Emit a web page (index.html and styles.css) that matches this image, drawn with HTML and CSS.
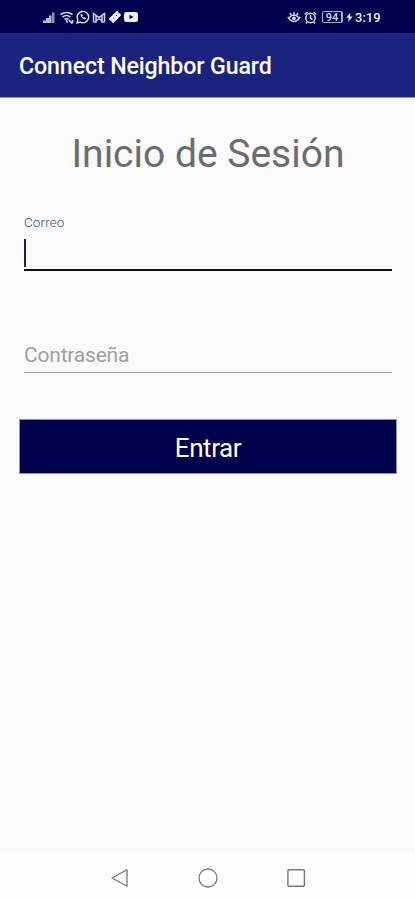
FILE: index.html
```html
<!DOCTYPE html>
<html lang="es">
<head>
  <meta charset="UTF-8">
  <meta name="viewport" content="width=device-width, initial-scale=1.0">
  <title>Connect Neighbor Guard</title>
  <link rel="stylesheet" href="styles.css">
</head>
<body>
  <div class="status-bar">
    <div class="status-left">
      <svg width="12" height="13" viewBox="0 0 12 13" fill="#dcdcf0">
        <path d="M0 9.500h3V12H0zM3 7h3v5H3zM6 4.500h2.500V12H6z" opacity=".85"/>
        <path d="M9 1.500h2.500V12H9z" opacity=".65"/>
      </svg>
      <svg width="14" height="13" viewBox="0 0 14 13" fill="none" stroke="#d0d0e8" stroke-width="1.700">
        <path d="M.5 3.500Q6.500-.5 12.500 3.500M2.500 6Q6.500 3 10.500 6M4.500 8.500Q6.500 7 8.500 8.500"/>
        <path d="M6 9.500l2 2M9 9l3 3.500M12.500 9v3.500"/>
      </svg>
      <svg width="14" height="14" viewBox="0 0 14 14" fill="none" stroke="#e4e4f4" stroke-width="1.400">
        <path d="M1 13l.9-3.200A5.700 5.700 0 1 1 4.200 12.100z"/>
        <path d="M4.700 4.200c-.8 2 2.300 5.300 4.800 5l.5-1.300-1.500-.8-.8.7-1.600-1.600.7-.8-.8-1.500z" fill="#e4e4f4" stroke="none"/>
      </svg>
      <svg width="14" height="13" viewBox="0 0 14 13" fill="none" stroke="#d0d0e8" stroke-width="1.500">
        <path d="M1.500 11V2.500L7 6.500l5.500-4V11M1.500 11h2.500V4.500M12.500 11H10V4.500M4 10L7 7.500l3 2.500"/>
      </svg>
      <svg width="14" height="14" viewBox="0 0 14 14">
        <path d="M8.800 1l1.300 1.100a1 1 0 0 0 1.300 1.300L13 5 5.200 13l-1.500-1.300a1 1 0 0 0-1.400-1.300L1 9z" fill="#f0f0fb" stroke="#f0f0fb" stroke-width=".6"/>
        <path d="M8 5l1.200 1.100M5.200 7.800l1.200 1.100" stroke="#00004d" stroke-width=".8"/>
      </svg>
      <svg width="14" height="12" viewBox="0 0 14 12">
        <rect y="1" width="14" height="10" rx="2.500" fill="#f0f0fb"/>
        <path d="M5.500 3.700v4.600l4-2.300z" fill="#00004d"/>
      </svg>
    </div>
    <div class="status-right">
      <svg width="14" height="13" viewBox="0 0 14 13" fill="none" stroke="#dcdcf0" stroke-width="1.400">
        <path d="M.8 6Q7 15 13.200 6M2.500 6.500Q7 1.500 11.500 6.500M7 1v3M3 2l1.300 2M11 2L9.700 4"/>
        <circle cx="7" cy="7.300" r="1.200" fill="#dcdcf0"/>
      </svg>
      <svg class="alarm" width="13" height="13" viewBox="0 0 13 13" fill="none" stroke="#dcdcf0" stroke-width="1.500">
        <circle cx="6.500" cy="7" r="4.700"/>
        <path d="M.7 3.500L3.500 1M12.300 3.500L9.500 1M6.500 4v3.300l2 1.200M3 11l-1 1.500M10 11l1 1.500"/>
      </svg>
      <span class="battery">94</span>
      <svg width="7" height="12" viewBox="0 0 7 12" fill="#e4e4f4">
        <path d="M4.400 1.500L.3 6.800h2.400L2.200 11l4.500-5.500H4z"/>
      </svg>
      <span class="clock">3:19</span>
    </div>
  </div>

  <div class="app-bar"><span class="app-name">Connect Neighbor Guard</span></div>

  <div class="login-form">
    <h1 class="login-header">Inicio de Sesión</h1>
    <div class="input-group active">
      <label class="small-label">Correo</label>
      <div class="caret"></div>
    </div>
    <div class="input-group">
      <label class="placeholder">Contraseña</label>
    </div>
    <button class="login-button">Entrar</button>
  </div>

  <div class="nav-bar">
    <svg width="20" height="22" viewBox="0 0 20 22" fill="none" stroke="#777" stroke-width="1.300">
      <path d="M17 2.700v16.600L2 11z" stroke-linejoin="round"/>
    </svg>
    <svg width="20" height="22" viewBox="0 0 20 22" fill="none" stroke="#777" stroke-width="1.300">
      <circle cx="10" cy="11" r="9"/>
    </svg>
    <svg width="20" height="22" viewBox="0 0 20 22" fill="none" stroke="#777" stroke-width="1.400">
      <rect x="1.900" y="2.700" width="16.500" height="16.600" rx="1"/>
    </svg>
  </div>
</body>
</html>
```

FILE: styles.css
```css
* {
  box-sizing: border-box;
}
body {
  font-family: Roboto, sans-serif;
  margin: 0;
  height: 900px;
  display: flex;
  flex-direction: column;
  background-color: #fafafa;
}
.status-bar {
  height: 33px;
  padding: 1px 34px 0 43px;
  display: flex;
  justify-content: space-between;
  align-items: center;
  background-color: #00004d;
}
.status-left, .status-right {
  display: flex;
  align-items: center;
}
.status-left {
  gap: 2px;
}
.status-left svg:first-child {
  margin-right: 3px;
}
.alarm {
  margin: 0 5px 0 3px;
}
.battery {
  width: 21px;
  height: 12px;
  margin-right: 3px;
  border: 1px solid #a8a8d0;
  border-right-width: 2px;
  border-radius: 2px;
  color: #dcdcf0;
  font-size: 11px;
  font-weight: 500;
  line-height: 11px;
  text-align: center;
}
.clock {
  width: 26px;
  margin-left: 2px;
  color: #e8e8f5;
  font-size: 13px;
  font-weight: 500;
  white-space: nowrap;
}
.app-bar {
  height: 65px;
  padding: 2px 19px 0;
  display: flex;
  align-items: center;
  background-color: #1a237e;
  border-bottom: 1px solid #8c90c0;
}
.app-name {
  color: white;
  font-size: 23.2px;
  font-weight: 500;
  letter-spacing: -0.12px;
}
.login-form {
  flex: 1;
  padding: 31px 18px 0 19px;
}
.login-header {
  height: 48px;
  margin: 0 0 36px;
  color: #6c6c6c;
  font-size: 39px;
  font-weight: 400;
  line-height: 50px;
  text-align: center;
}
.input-group {
  height: 40px;
  margin: 0 5px;
  border-bottom: 1px solid #a5a5a5;
}
.input-group.active {
  height: 58px;
  margin-bottom: 62px;
  border-bottom: 2px solid #111;
}
.small-label {
  display: block;
  height: 26px;
  color: #4c4c74;
  font-size: 13.5px;
  font-weight: 300;
  letter-spacing: 0.1px;
  line-height: 19px;
}
.caret {
  width: 2px;
  height: 28px;
  background-color: #1c1c50;
}
.placeholder {
  display: block;
  color: #9e9e9e;
  font-size: 21px;
  letter-spacing: -0.2px;
  line-height: 45px;
}
.login-button {
  display: block;
  width: 100%;
  height: 55px;
  margin-top: 46px;
  padding: 2px 0 0;
  background-color: #00004d;
  color: white;
  border: 1px solid #9090ba;
  font-family: inherit;
  font-size: 26px;
  letter-spacing: -0.4px;
}
.nav-bar {
  height: 45px;
  padding: 0 109px 0 110px;
  display: flex;
  justify-content: space-between;
  align-items: center;
  background-color: #fdfdfd;
}
```
